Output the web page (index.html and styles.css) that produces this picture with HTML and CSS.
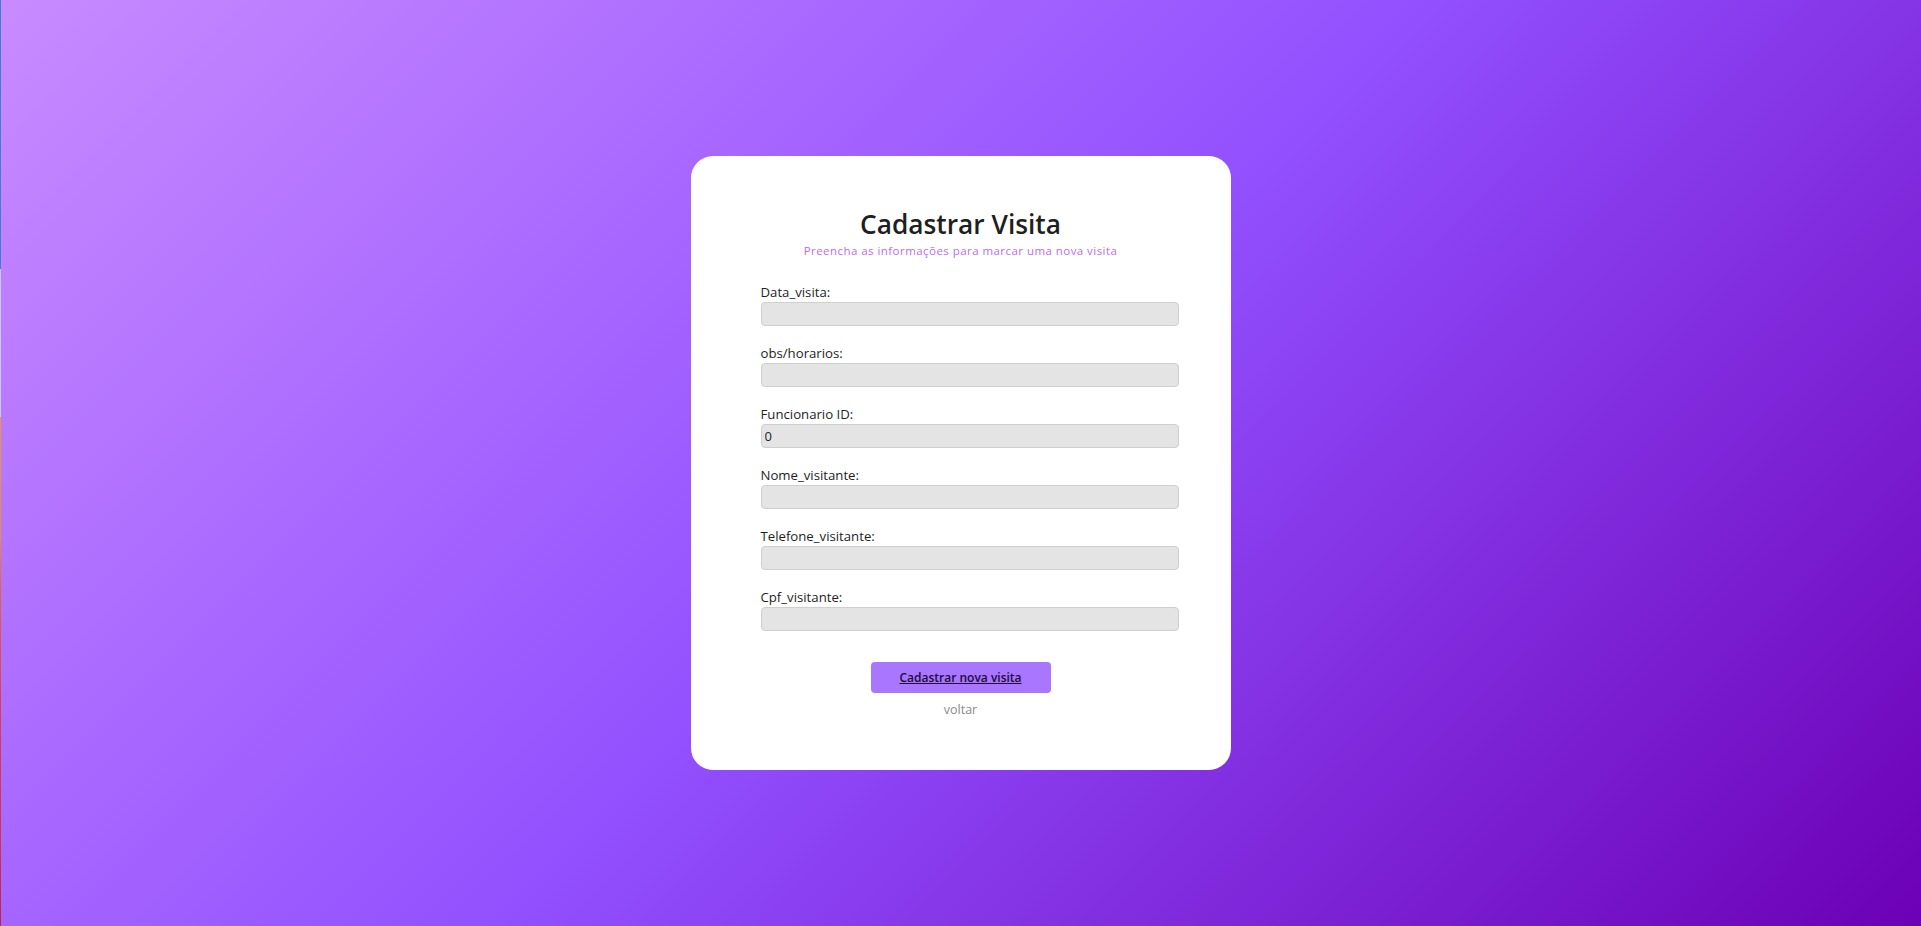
FILE: index.html
```html
<!DOCTYPE html>
<html lang="pt-BR">
<head>
<meta charset="utf-8">
<title>Cadastrar Visita</title>
<link rel="stylesheet" href="styles.css">
</head>
<body>
<div class="edge-strip"></div>
<main class="page">
  <section class="card">
    <h1 class="title">Cadastrar Visita</h1>
    <p class="subtitle">Preencha as informações para marcar uma nova visita</p>
    <form class="form">
      <label class="field">
        <span class="label">Data_visita:</span>
        <input class="input" type="text">
      </label>
      <label class="field">
        <span class="label">obs/horarios:</span>
        <input class="input" type="text">
      </label>
      <label class="field">
        <span class="label">Funcionario ID:</span>
        <input class="input" type="text" value="0">
      </label>
      <label class="field">
        <span class="label">Nome_visitante:</span>
        <input class="input" type="text">
      </label>
      <label class="field">
        <span class="label">Telefone_visitante:</span>
        <input class="input" type="text">
      </label>
      <label class="field">
        <span class="label">Cpf_visitante:</span>
        <input class="input" type="text">
      </label>
      <div class="actions">
        <button class="submit" type="button"><span class="submit-text">Cadastrar nova visita</span></button>
        <a class="back" href="#">voltar</a>
      </div>
    </form>
  </section>
</main>
</body>
</html>
```

FILE: styles.css
```css
* { box-sizing: border-box; }

html, body {
  margin: 0;
  height: 100%;
}

body {
  font-family: "Open Sans", "Liberation Sans", sans-serif;
  background: linear-gradient(135deg, #c98bff 0%, #9250ff 50%, #6c00b6 100%);
  min-height: 926px;
}

.edge-strip {
  position: fixed;
  left: 0;
  top: 0;
  width: 1px;
  height: 100%;
  background: linear-gradient(to bottom,
    #3d7fd0 0%, #3d7fd0 29%,
    #c9c6f0 29%, #c9c6f0 45%,
    #e89a3a 45%, #e4903c 58%,
    #e26a3c 63%, #dc3f4c 76%, #d4304c 92%, #b8283c 100%);
}

.page {
  display: flex;
  justify-content: center;
  padding-top: 156px;
}

.card {
  width: 540px;
  background: #fff;
  border-radius: 22px;
  padding: 50px 70px 50px;
}

.title {
  margin: 0;
  text-align: center;
  font-size: 26.3px;
  line-height: 36px;
  font-weight: 600;
  color: #1f1f1f;
}

.subtitle {
  margin: 1px 0 0;
  text-align: center;
  font-size: 11.5px;
  line-height: 16px;
  letter-spacing: 0.45px;
  color: #c06af8;
}

.form {
  display: flex;
  flex-direction: column;
  margin-top: 23px;
}

.field {
  display: flex;
  flex-direction: column;
  margin-bottom: 17px;
}

.label {
  font-size: 13.2px;
  line-height: 20px;
  color: #1e1e1e;
}

.input {
  width: calc(100% + 18px);
  height: 24px;
  padding: 0 3px;
  margin: 0;
  border: 1px solid #cfcfcf;
  border-radius: 4px;
  background: #e4e4e4;
  font-family: inherit;
  font-size: 13px;
  color: #222;
  outline: none;
}

.actions {
  display: flex;
  flex-direction: column;
  align-items: center;
  margin-top: 14px;
}

.submit {
  width: 180px;
  height: 31px;
  border: none;
  border-radius: 4px;
  background: #a876ff;
  font-family: inherit;
  font-size: 12px;
  font-weight: 600;
  color: #1d0a3a;
  cursor: pointer;
}

.submit-text {
  text-decoration: underline;
}

.back {
  margin-top: 7px;
  font-size: 12.5px;
  line-height: 20px;
  color: #8a8a8a;
  text-decoration: none;
}
```
